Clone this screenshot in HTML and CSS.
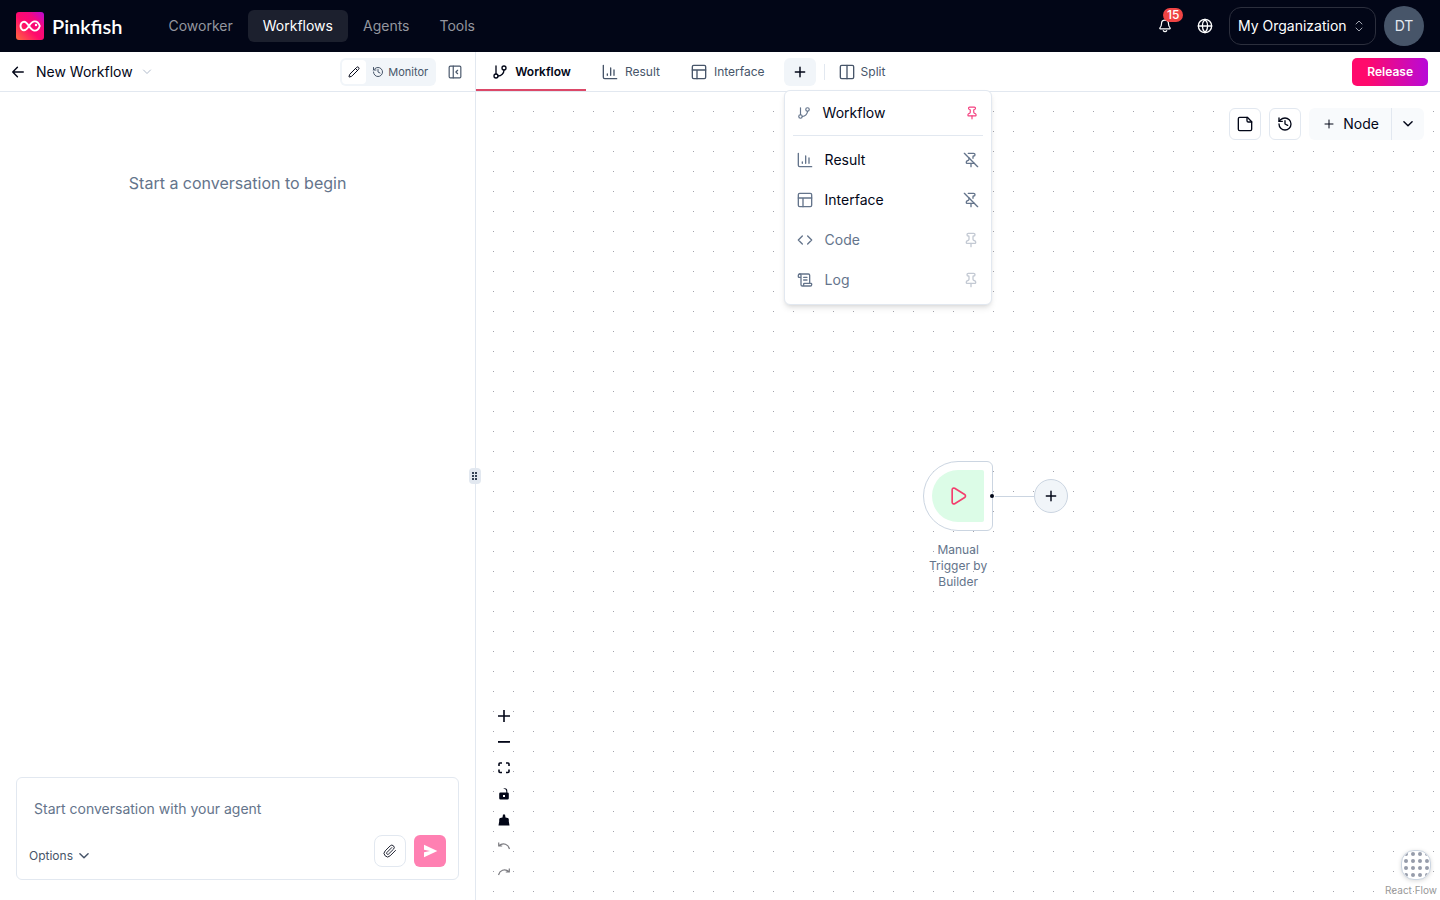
FILE: index.html
```html
<!DOCTYPE html>
<html lang="en">

<head>
  <meta charset="UTF-8">
  <meta name="viewport" content="width=device-width, initial-scale=1.0">
  <title>New Workflow - Pinkfish</title>
  <link rel="stylesheet" href="styles.css">
</head>

<body>
  <!-- shared icons -->
  <svg class="sprite" aria-hidden="true">
    <symbol id="branch" viewBox="0 0 24 24"><path d="M6 3v12"/><circle cx="18" cy="6" r="3"/><circle cx="6" cy="18" r="3"/><path d="M18 9a9 9 0 0 1-9 9"/></symbol>
    <symbol id="chart" viewBox="0 0 24 24"><path d="M2 2v18a2 2 0 0 0 2 2h18"/><path d="M8 17v-2M13 17V6M18 17V9"/></symbol>
    <symbol id="layout" viewBox="0 0 24 24"><rect x="2" y="2" width="20" height="20" rx="2"/><path d="M2 9h20M9 22V9"/></symbol>
    <symbol id="plus" viewBox="0 0 24 24"><path d="M4 12h16M12 4v16"/></symbol>
    <symbol id="down" viewBox="0 0 24 24"><path d="m5 8 7 7 7-7"/></symbol>
    <symbol id="history" viewBox="0 0 24 24"><path d="M3 12a9 9 0 1 0 9-9 9.750 9.750 0 0 0-6.740 2.740L3 8"/><path d="M3 3v5h5"/><path d="M12 7v5l4 2"/></symbol>
    <symbol id="pin" viewBox="0 0 24 24"><path d="M12 17v5"/><path d="M9 10.760a2 2 0 0 1-1.110 1.790l-1.780.9A2 2 0 0 0 5 15.240V16a1 1 0 0 0 1 1h12a1 1 0 0 0 1-1v-.760a2 2 0 0 0-1.110-1.790l-1.780-.9A2 2 0 0 1 15 10.760V7a1 1 0 0 1 1-1 2 2 0 0 0 0-4H8a2 2 0 0 0 0 4 1 1 0 0 1 1 1z"/></symbol>
    <symbol id="pin-off" viewBox="0 0 24 24"><path d="M12 17v5"/><path d="M15 9.340V7a1 1 0 0 1 1-1 2 2 0 0 0 0-4H7.890"/><path d="m2 2 20 20"/><path d="M9 9v1.760a2 2 0 0 1-1.110 1.790l-1.780.9A2 2 0 0 0 5 15.240V16a1 1 0 0 0 1 1h11"/></symbol>
  </svg>

  <header class="topbar">
    <a class="brand" href="#">
      <svg class="brand-mark" viewBox="0 0 28 28" aria-hidden="true">
        <defs>
          <linearGradient id="brandFill" x1="0" y1="1" x2="1" y2="0">
            <stop offset="0" stop-color="#ff6a3d"/>
            <stop offset="0.45" stop-color="#ff0a6c"/>
            <stop offset="0.7" stop-color="#f5087e"/>
            <stop offset="1" stop-color="#b80ad8"/>
          </linearGradient>
        </defs>
        <rect width="28" height="28" rx="3" fill="url(#brandFill)"/>
        <path d="M13 14c-1.800-2.800-3.300-4.300-5-4.300S4.500 11.600 4.500 14s1.800 4.300 3.500 4.300S11.200 16.800 13 14s3.600-4.600 5.800-4.600c2.300 0 4 1.700 5 4.600-1 2.900-2.700 4.600-5 4.600-2.200 0-4-1.800-5.800-4.600z" fill="none" stroke="#fff" stroke-width="1.900"/>
        <circle cx="20" cy="13" r="1.200" fill="#fff"/>
      </svg>
      <span class="brand-name">Pinkfish</span>
    </a>
    <nav class="nav">
      <a href="#">Coworker</a>
      <a class="active" href="#">Workflows</a>
      <a href="#">Agents</a>
      <a href="#">Tools</a>
    </nav>
    <div class="account">
      <button class="top-icon" aria-label="Notifications">
        <svg class="icon s14" viewBox="0 0 24 24"><path d="M9 20a3.500 3.500 0 0 0 6 0"/><path d="M3.300 15.300A1 1 0 0 0 4 17h16a1 1 0 0 0 .700-1.700C19.400 14 18 12.500 18 8A6 6 0 0 0 6 8c0 4.500-1.400 6-2.700 7.300"/></svg>
        <span class="badge">15</span>
      </button>
      <button class="top-icon" aria-label="Language">
        <svg class="icon s16" viewBox="0 0 24 24"><circle cx="12" cy="12" r="10"/><path d="M12 2a14.500 14.500 0 0 0 0 20 14.500 14.500 0 0 0 0-20M2 12h20"/></svg>
      </button>
      <div class="org">
        <select aria-label="Organization">
          <option>My Organization</option>
        </select>
        <svg class="icon s12 org-arrows" viewBox="0 0 24 24" aria-hidden="true"><path d="m6 16 6 6 6-6M6 8l6-6 6 6"/></svg>
      </div>
      <button class="avatar">DT</button>
    </div>
  </header>

  <main class="workspace">
    <section class="chat">
      <div class="chat-bar">
        <button class="plain" aria-label="Back">
          <svg class="icon s14 bold" viewBox="0 0 24 24"><path d="m11 4-8 8 8 8M3 12h18"/></svg>
        </button>
        <button class="plain title">New Workflow
          <svg class="icon s12 faint" viewBox="0 0 24 24"><use href="#down"/></svg>
        </button>
        <div class="mode">
          <button class="mode-edit" aria-label="Edit">
            <svg class="icon s12" viewBox="0 0 24 24"><path d="M21.200 6.800a1 1 0 0 0-4-4L3.800 16.200a2 2 0 0 0-.500.800L2 21.400a.5.5 0 0 0 .600.600L7 20.700a2 2 0 0 0 .800-.500zM15 5l4 4"/></svg>
          </button>
          <button class="mode-monitor">
            <svg class="icon s12" viewBox="0 0 24 24"><use href="#history"/></svg>
            Monitor
          </button>
        </div>
        <button class="plain collapse" aria-label="Collapse panel">
          <svg class="icon s14" viewBox="0 0 24 24"><rect x="2" y="2" width="20" height="20" rx="2"/><path d="M9 2v20M16.500 15l-3-3 3-3"/></svg>
        </button>
      </div>

      <div class="chat-body">
        <p>Start a conversation to begin</p>
      </div>

      <form class="composer">
        <textarea rows="1" placeholder="Start conversation with your agent" aria-label="Message"></textarea>
        <div class="composer-row">
          <button class="plain options" type="button">Options
            <svg class="icon s14 bold" viewBox="0 0 24 24"><use href="#down"/></svg>
          </button>
          <button class="attach" type="button" aria-label="Attach file">
            <svg class="icon s14 thin" viewBox="0 0 24 24"><path d="m21.400 11.100-9.200 9.200a6 6 0 0 1-8.500-8.500l8.600-8.600a4 4 0 1 1 5.700 5.700l-8.600 8.500a2 2 0 0 1-2.800-2.800l8.500-8.500"/></svg>
          </button>
          <button class="send" type="submit" aria-label="Send">
            <svg class="s16" viewBox="0 0 24 24"><path d="M3 2.500 23 12 3 21.500V14l9-2-9-2z" fill="currentColor"/></svg>
          </button>
        </div>
      </form>
    </section>

    <div class="divider">
      <span class="grip">
        <svg viewBox="0 0 6 9" aria-hidden="true"><path d="M0 0h2v2H0zM3 0h2v2H3zM0 3h2v2H0zM3 3h2v2H3zM0 6h2v2H0zM3 6h2v2H3z" fill="#334155"/></svg>
      </span>
    </div>

    <section class="editor">
      <div class="tabs">
        <button class="tab current"><svg class="icon s16" viewBox="0 0 24 24"><use href="#branch"/></svg>Workflow</button>
        <button class="tab"><svg class="icon s16" viewBox="0 0 24 24"><use href="#chart"/></svg>Result</button>
        <button class="tab"><svg class="icon s16" viewBox="0 0 24 24"><use href="#layout"/></svg>Interface</button>
        <div class="add">
          <button class="add-button" aria-label="Add tab"><svg class="icon s14 bold" viewBox="0 0 24 24"><use href="#plus"/></svg></button>
          <div class="menu">
            <button class="menu-item first">
              <svg class="icon s14" viewBox="0 0 24 24"><use href="#branch"/></svg>
              <span>Workflow</span>
              <svg class="icon s14 pinned" viewBox="0 0 24 24"><use href="#pin"/></svg>
            </button>
            <hr>
            <button class="menu-item">
              <svg class="icon s16" viewBox="0 0 24 24"><use href="#chart"/></svg>
              <span>Result</span>
              <svg class="icon s16" viewBox="0 0 24 24"><use href="#pin-off"/></svg>
            </button>
            <button class="menu-item">
              <svg class="icon s16" viewBox="0 0 24 24"><use href="#layout"/></svg>
              <span>Interface</span>
              <svg class="icon s16" viewBox="0 0 24 24"><use href="#pin-off"/></svg>
            </button>
            <button class="menu-item off">
              <svg class="icon s16" viewBox="0 0 24 24"><path d="m16 18 6-6-6-6M8 6l-6 6 6 6"/></svg>
              <span>Code</span>
              <svg class="icon s16 pale" viewBox="0 0 24 24"><use href="#pin"/></svg>
            </button>
            <button class="menu-item off">
              <svg class="icon s16" viewBox="0 0 24 24"><path d="M15 12h-5M15 8h-5M19 17V5a2 2 0 0 0-2-2H4"/><path d="M8 21h12a2 2 0 0 0 2-2v-1a1 1 0 0 0-1-1H11a1 1 0 0 0-1 1v1a2 2 0 1 1-4 0V5a2 2 0 1 0-4 0v2a1 1 0 0 0 1 1h3"/></svg>
              <span>Log</span>
              <svg class="icon s16 pale" viewBox="0 0 24 24"><use href="#pin"/></svg>
            </button>
          </div>
        </div>
        <button class="tab split"><svg class="icon s16" viewBox="0 0 24 24"><rect x="2" y="2" width="20" height="20" rx="2"/><path d="M12 2v20"/></svg>Split</button>
        <button class="release">Release</button>
      </div>

      <div class="canvas">
        <svg class="dots" aria-hidden="true">
          <pattern id="dotGrid" x="17" y="19" width="20" height="20" patternUnits="userSpaceOnUse">
            <rect width="1" height="1" fill="#a3a3ab"/>
          </pattern>
          <rect width="100%" height="100%" fill="url(#dotGrid)"/>
        </svg>

        <div class="tools">
          <button class="tool" aria-label="Add note"><svg class="icon s16" viewBox="0 0 24 24"><path d="M15.500 2H4a2 2 0 0 0-2 2v16a2 2 0 0 0 2 2h16a2 2 0 0 0 2-2V8.500z"/><path d="M15 2v5a2 2 0 0 0 2 2h5"/></svg></button>
          <button class="tool" aria-label="History"><svg class="icon s16" viewBox="0 0 24 24"><use href="#history"/></svg></button>
          <div class="node-add">
            <button class="node-button"><svg class="icon s12" viewBox="0 0 24 24"><use href="#plus"/></svg>Node</button>
            <button class="node-more" aria-label="More nodes"><svg class="icon s14 bold" viewBox="0 0 24 24"><use href="#down"/></svg></button>
          </div>
        </div>

        <div class="trigger">
          <div class="trigger-fill">
            <svg class="icon play" viewBox="0 0 24 24"><path d="M5 4.500c0-1.600 1.600-2.500 3-1.700l12 7.400c1.300.8 1.300 2.800 0 3.600L8 21.200c-1.400.8-3-.1-3-1.700z"/></svg>
          </div>
          <span class="handle"></span>
          <span class="edge"></span>
          <button class="next" aria-label="Add step"><svg class="icon s14 bold" viewBox="0 0 24 24"><use href="#plus"/></svg></button>
          <p class="trigger-label">Manual Trigger by Builder</p>
        </div>

        <div class="controls">
          <button aria-label="Zoom in"><svg viewBox="0 0 12 12"><path d="M5.200 0h1.600v5.200H12v1.600H6.800V12H5.200V6.800H0V5.200h5.200z"/></svg></button>
          <button aria-label="Zoom out"><svg viewBox="0 0 12 12"><path d="M0 5h12v1.800H0z"/></svg></button>
          <button aria-label="Fit view"><svg viewBox="0 0 12 12"><path d="M1 4V2Q1 1 2 1h2M8 1h2q1 0 1 1v2M11 7.500V9.500q0 1-1 1H8M4 10.500H2q-1 0-1-1V7.500" fill="none" stroke="currentColor" stroke-width="1.600"/></svg></button>
          <button aria-label="Toggle interactivity"><svg viewBox="0 0 12 12"><path d="M2.500 4.500h5.800V3Q8.300 1 6 .8L5 .5Q9.300-.8 9.300 3v1.500q1.500 0 1.500 1.200v4.500q0 1.300-1.300 1.300h-7q-1.300 0-1.300-1.300V5.700q0-1.200 1.300-1.200zM5 7v2h2V7z" fill-rule="evenodd"/></svg></button>
          <button aria-label="Clean up"><svg viewBox="0 0 12 12"><path d="M5 .5h2l.5 3 2.300.5q1 .4 1 1.500v2l.7 4H.5l.7-4v-2q0-1.100 1-1.500l2.300-.5z"/></svg></button>
          <button class="dim" aria-label="Undo"><svg viewBox="0 0 12 12"><path d="M.7 2.500V6h3.500M1 5.800Q4 3 7.500 4.300q3 1.200 4 4.700" fill="none" stroke="currentColor" stroke-width="1.200"/></svg></button>
          <button class="dim" aria-label="Redo"><svg viewBox="0 0 12 12"><path d="M11.300 2.500V6H7.800M11 5.800Q8 3 4.500 4.300q-3 1.200-4 4.700" fill="none" stroke="currentColor" stroke-width="1.200"/></svg></button>
        </div>

        <div class="corner">
          <button class="grid-button" aria-label="Apps">
            <svg viewBox="0 0 28 28">
              <pattern id="appDots" x="2" y="1" width="7" height="7" patternUnits="userSpaceOnUse"><circle cx="2" cy="2" r="2" fill="#969caa"/></pattern>
              <rect x="1" width="26" height="28" rx="11" fill="url(#appDots)"/>
            </svg>
          </button>
          <a href="#">React Flow</a>
        </div>
      </div>
    </section>
  </main>
</body>

</html>
```
FILE: styles.css
```css
* {
  margin: 0;
  padding: 0;
  box-sizing: border-box;
}

body {
  display: flex;
  flex-direction: column;
  height: 100vh;
  overflow: hidden;
  background: #fff;
  color: #020617;
  font-family: Inter, "Liberation Sans", sans-serif;
  font-size: 14px;
  line-height: 20px;
}

button,
select,
textarea {
  font: inherit;
  color: inherit;
  background: none;
  border: none;
  outline: none;
}

button {
  display: flex;
  align-items: center;
  justify-content: center;
  cursor: pointer;
}

a {
  color: inherit;
  text-decoration: none;
}

.sprite {
  position: absolute;
  width: 0;
  height: 0;
}

/* icons */
.icon {
  flex: none;
  fill: none;
  stroke: currentColor;
  stroke-width: 2;
  stroke-linecap: round;
  stroke-linejoin: round;
}

.s12 {
  width: 12px;
  height: 12px;
}

.s14 {
  width: 14px;
  height: 14px;
}

.s16 {
  width: 16px;
  height: 16px;
}

.bold {
  stroke-width: 2.5;
}

.thin {
  stroke-width: 1.5;
}

.faint {
  stroke-width: 1.5;
  color: #94a3b8;
}

/* top bar */
.topbar {
  display: flex;
  align-items: center;
  flex: none;
  height: 52px;
  padding: 0 16px;
  background: #020617;
  color: #fff;
}

.brand {
  display: flex;
  align-items: center;
  gap: 8px;
}

.brand-mark {
  width: 28px;
  height: 28px;
}

.brand-name {
  font-family: Lato, sans-serif;
  font-size: 20px;
  font-weight: 600;
}

.nav {
  display: flex;
  margin-left: 31px;
}

.nav a {
  padding: 6px 15px;
  border-radius: 6px;
  color: #94969f;
}

.nav .active {
  background: #1c202e;
  color: #fff;
}

.account {
  display: flex;
  align-items: center;
  gap: 8px;
  margin-left: auto;
}

.top-icon {
  position: relative;
  width: 32px;
  height: 32px;
}

.badge {
  position: absolute;
  top: -2px;
  left: 14px;
  padding: 0 4px;
  border-radius: 8px;
  background: #ef4444;
  font-size: 12px;
  font-weight: 500;
  line-height: 14px;
}

.org {
  display: flex;
  align-items: center;
  position: relative;
}

.org select {
  height: 38px;
  padding: 0 28px 0 8px;
  border: 1px solid #2c2f3d;
  border-radius: 12px;
  appearance: none;
}

.org-arrows {
  position: absolute;
  right: 11px;
  color: #a1a5b0;
  pointer-events: none;
}

.avatar {
  width: 40px;
  height: 40px;
  border-radius: 50%;
  background: #475569;
  color: #e2e8f0;
}

/* chat panel */
.workspace {
  display: flex;
  flex: 1;
  min-height: 0;
}

.chat {
  display: flex;
  flex-direction: column;
  flex: none;
  width: 33%;
}

.chat-bar {
  display: flex;
  align-items: center;
  flex: none;
  height: 40px;
  padding: 0 13px 0 11px;
  border-bottom: 1px solid #e2e8f0;
}

.title {
  gap: 8px;
  margin-left: 11px;
}

.mode {
  display: flex;
  margin-left: auto;
  padding: 2px;
  border-radius: 6px;
  background: #f1f5f9;
}

.mode-edit {
  width: 24px;
  height: 24px;
  border-radius: 4px;
  background: #fff;
}

.mode-monitor {
  gap: 4px;
  padding: 0 6px;
  color: #475569;
  font-size: 11px;
}

.collapse {
  margin-left: 12px;
  color: #475569;
}

.chat-body {
  flex: 1;
  padding-top: 79px;
  color: #64748b;
  font-size: 16px;
  line-height: 24px;
  text-align: center;
}

.composer {
  margin: 0 16px 20px;
  padding: 12px;
  border: 1px solid #e2e8f0;
  border-radius: 6px;
}

.composer textarea {
  display: block;
  width: 100%;
  height: 37px;
  margin-bottom: 8px;
  padding: 9px 5px 0;
  resize: none;
}

.composer textarea::placeholder {
  color: #64748b;
}

.composer-row {
  display: flex;
  align-items: flex-end;
  gap: 8px;
}

.options {
  gap: 4px;
  height: 22px;
  margin-right: auto;
  color: #475569;
  font-size: 12px;
}

.attach,
.send {
  width: 32px;
  height: 32px;
  border: 1px solid #e2e8f0;
  border-radius: 8px;
}

.send {
  border: none;
  border-radius: 6px;
  background: #ff80b2;
  color: #fff;
}

.divider {
  position: relative;
  flex: none;
  width: 1px;
  background: #e2e8f0;
}

.grip {
  display: flex;
  align-items: center;
  justify-content: center;
  position: absolute;
  top: 50%;
  left: -6px;
  width: 12px;
  height: 16px;
  margin-top: -8px;
  border-radius: 4px;
  background: #e2e8f0;
}

.grip svg {
  width: 6px;
  height: 9px;
}

/* editor tabs */
.editor {
  display: flex;
  flex-direction: column;
  flex: 1;
  min-width: 0;
}

.tabs {
  display: flex;
  align-items: center;
  flex: none;
  height: 40px;
  padding-right: 12px;
  border-bottom: 1px solid #e2e8f0;
}

.tab {
  gap: 7px;
  height: 39px;
  padding: 0 15px 0 16px;
  border-bottom: 2px solid transparent;
  border-top: 2px solid transparent;
  color: #475569;
  font-size: 12px;
}

.current {
  border-bottom-color: #dc4868;
  color: #020617;
  font-weight: 600;
}

.add {
  position: relative;
  margin: 0 8px 0 4px;
}

.add-button {
  width: 32px;
  height: 28px;
  border-radius: 6px;
  background: #f1f5f9;
}

.split {
  gap: 6px;
  height: 16px;
  border: none;
  border-left: 1px solid #e2e8f0;
  padding: 0 14px;
}

.release {
  height: 28px;
  margin-left: auto;
  padding: 0 15px;
  border-radius: 5px;
  background: linear-gradient(90deg, #ff0a6c 20%, #b80ad8);
  color: #fff;
  font-size: 12px;
  font-weight: 600;
}

.menu {
  position: absolute;
  top: 32px;
  left: 0;
  z-index: 5;
  width: 208px;
  padding: 4px;
  border: 1px solid #e2e8f0;
  border-radius: 6px;
  background: #fff;
  box-shadow: 0 4px 6px -1px rgba(0, 0, 0, 0.1), 0 2px 4px -2px rgba(0, 0, 0, 0.1);
}

.menu hr {
  margin: 4px;
  border: none;
  border-top: 1px solid #e2e8f0;
}

.menu-item {
  gap: 12px;
  width: 100%;
  height: 40px;
  padding: 0 8px;
  color: #64748b;
}

.menu-item span {
  flex: 1;
  color: #020617;
  text-align: left;
}

.first {
  height: 36px;
}

.off span {
  color: #64748b;
}

.pinned {
  color: #f43f7f;
}

.pale {
  color: #c3c9d3;
}

/* canvas */
.canvas {
  position: relative;
  flex: 1;
  overflow: hidden;
}

.dots {
  display: block;
  width: 100%;
  height: 100%;
}

.tools {
  display: flex;
  gap: 8px;
  position: absolute;
  top: 16px;
  right: 16px;
}

.tool {
  width: 32px;
  height: 32px;
  border: 1px solid #e2e8f0;
  border-radius: 6px;
  background: #fff;
}

.node-add {
  display: flex;
  height: 32px;
  border-radius: 6px;
  background: #f8fafc;
}

.node-button {
  gap: 8px;
  padding: 0 12px 0 14px;
}

.node-more {
  width: 33px;
  border-left: 1px solid #e2e8f0;
}

.trigger {
  position: absolute;
  top: 50%;
  left: 50%;
  width: 70px;
  height: 70px;
  margin: -35px;
  padding: 8px;
  border: 1px solid #cbd5e1;
  border-radius: 35px 6px 6px 35px;
  background: #fff;
}

.trigger-fill {
  display: flex;
  align-items: center;
  justify-content: center;
  height: 52px;
  border-radius: 26px 2px 2px 26px;
  background: #dcfce7;
}

.play {
  width: 20px;
  height: 20px;
  color: #f43f6e;
}

.handle {
  position: absolute;
  top: 32px;
  right: -2px;
  width: 4px;
  height: 4px;
  border-radius: 50%;
  background: #020617;
}

.edge {
  position: absolute;
  top: 34px;
  left: 71px;
  width: 39px;
  height: 1px;
  background: #cbd5e1;
}

.next {
  position: absolute;
  top: 17px;
  left: 110px;
  width: 34px;
  height: 34px;
  border: 1px solid #cbd5e1;
  border-radius: 50%;
  background: #f1f5f9;
}

.trigger-label {
  position: absolute;
  top: 80px;
  left: 0;
  width: 68px;
  color: #64748b;
  font-size: 12px;
  line-height: 16px;
  text-align: center;
}

.controls {
  display: flex;
  flex-direction: column;
  position: absolute;
  bottom: 15px;
  left: 15px;
}

.controls button {
  width: 26px;
  height: 26px;
}

.controls svg {
  width: 12px;
  height: 12px;
  fill: currentColor;
}

.controls .dim {
  color: #7b7b80;
}

.corner {
  position: absolute;
  right: 3px;
  bottom: 4px;
  color: #999;
  font-size: 10px;
  line-height: 12px;
}

.grid-button {
  width: 30px;
  height: 30px;
  margin: 0 6px 4px auto;
  border: 1px solid #cbd5e1;
  border-radius: 13px;
  background: #fff;
  box-shadow: 0 1px 4px rgba(0, 0, 0, 0.15);
}

.grid-button svg {
  width: 28px;
  height: 28px;
}
```
